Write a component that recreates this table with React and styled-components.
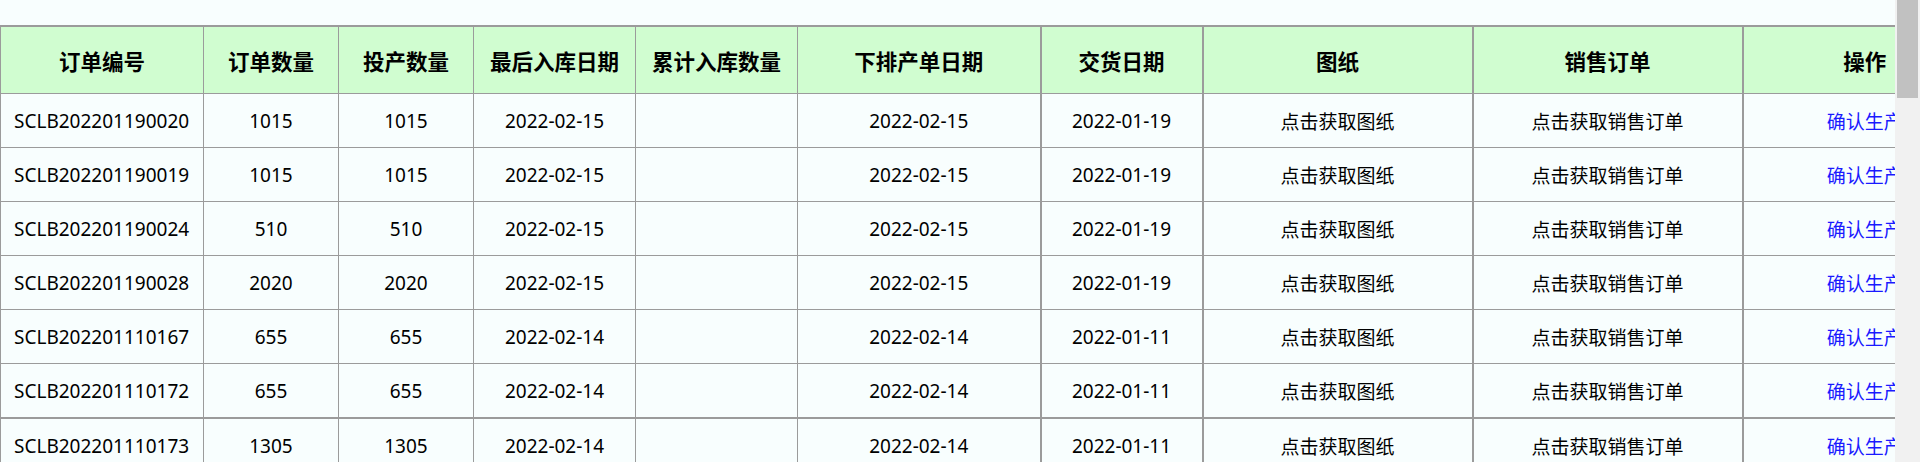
import React from 'react';
import styled, { createGlobalStyle } from 'styled-components';

const GlobalStyle = createGlobalStyle`
  html, body {
    margin: 0;
    padding: 0;
    height: 462px;
    overflow: hidden;
    background: #f8fefe;
  }
  body {
    font-family: "Noto Sans", "Noto Sans CJK SC", sans-serif;
  }
`;

const Page = styled.div`
  display: flex;
  width: 1920px;
  height: 462px;
`;

const Viewport = styled.div`
  flex: 1;
  overflow: hidden;
  padding-top: 25px;
  background: #f8fefe;
`;

const ScrollTrack = styled.div`
  width: 25px;
  flex: none;
  background: #f1f1f1;
  padding: 0 2px;
  box-sizing: border-box;
`;

const ScrollThumb = styled.div`
  height: 98px;
  background: #c1c1c1;
`;

const Table = styled.table`
  border-collapse: collapse;
  table-layout: fixed;
  width: 1986px;
  border-top: 2px solid #9b9b9b;
`;

const HeadCell = styled.th`
  height: 66px;
  padding: 0;
  background: #d0fdd0;
  border: 1px solid #9b9b9b;
  border-left-width: ${p => (p.$thick ? '2px' : '1px')};
  border-top: 2px solid #9b9b9b;
  font-size: 21.5px;
  font-weight: 700;
  color: #000;
  text-align: center;
  white-space: nowrap;
  overflow: hidden;
`;

const Row = styled.tr`
  border-top: ${p => (p.$thick ? '2px' : '1px')} solid #9b9b9b;
`;

const Cell = styled.td`
  height: 53px;
  padding: ${p => (p.$left ? '0 0 0 13px' : '0')};
  background: #f8fefe;
  border: 1px solid #9b9b9b;
  border-left-width: ${p => (p.$thick ? '2px' : '1px')};
  font-size: 19px;
  color: #000;
  text-align: ${p => (p.$left ? 'left' : 'center')};
  white-space: nowrap;
  overflow: hidden;
`;

const Action = styled.a`
  color: #1a1aff;
  text-decoration: none;
  cursor: pointer;
`;

const columns = [
  { title: '订单编号', width: 203 },
  { title: '订单数量', width: 135 },
  { title: '投产数量', width: 135 },
  { title: '最后入库日期', width: 162 },
  { title: '累计入库数量', width: 162 },
  { title: '下排产单日期', width: 243 },
  { title: '交货日期', width: 162, thick: true },
  { title: '图纸', width: 270, thick: true },
  { title: '销售订单', width: 270, thick: true },
  { title: '操作', width: 244, thick: true },
];

const rows = [
  ['SCLB202201190020', '1015', '1015', '2022-02-15', '', '2022-02-15', '2022-01-19'],
  ['SCLB202201190019', '1015', '1015', '2022-02-15', '', '2022-02-15', '2022-01-19'],
  ['SCLB202201190024', '510', '510', '2022-02-15', '', '2022-02-15', '2022-01-19'],
  ['SCLB202201190028', '2020', '2020', '2022-02-15', '', '2022-02-15', '2022-01-19'],
  ['SCLB202201110167', '655', '655', '2022-02-14', '', '2022-02-14', '2022-01-11'],
  ['SCLB202201110172', '655', '655', '2022-02-14', '', '2022-02-14', '2022-01-11'],
  ['SCLB202201110173', '1305', '1305', '2022-02-14', '', '2022-02-14', '2022-01-11'],
  ['SCLB202201110174', '1305', '1305', '2022-02-14', '', '2022-02-14', '2022-01-11'],
];

const App = () => {
  return (
    <Page>
      <GlobalStyle />
      <Viewport>
        <Table>
          <colgroup>
            {columns.map(col => (
              <col key={col.title} style={{ width: col.width }} />
            ))}
          </colgroup>
          <thead>
            <tr>
              {columns.map(col => (
                <HeadCell key={col.title} $thick={col.thick}>{col.title}</HeadCell>
              ))}
            </tr>
          </thead>
          <tbody>
            {rows.map((row, i) => (
              <Row key={row[0]} $thick={i === 6}>
                {row.map((value, j) => (
                  <Cell key={j} $left={j === 0} $thick={columns[j].thick}>{value}</Cell>
                ))}
                <Cell $thick>点击获取图纸</Cell>
                <Cell $thick>点击获取销售订单</Cell>
                <Cell $thick><Action>确认生产</Action></Cell>
              </Row>
            ))}
          </tbody>
        </Table>
      </Viewport>
      <ScrollTrack>
        <ScrollThumb />
      </ScrollTrack>
    </Page>
  );
};

export default App;
